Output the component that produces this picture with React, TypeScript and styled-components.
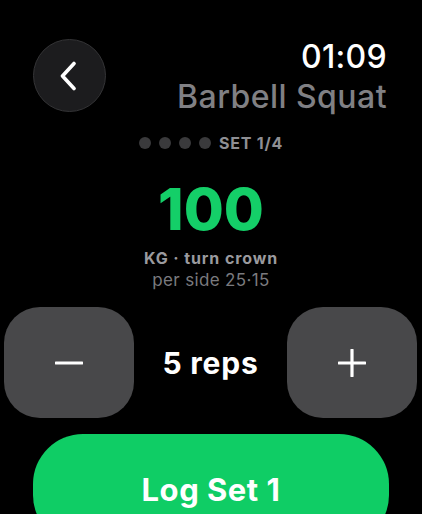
import React from "react";
import styled, { createGlobalStyle } from "styled-components";

const Global = createGlobalStyle`
  html, body {
    margin: 0;
    padding: 0;
    background: #000;
    overflow: hidden;
  }
  body {
    font-family: Inter, "Noto Sans", "Liberation Sans", sans-serif;
    -webkit-font-smoothing: antialiased;
  }
`;

const Screen = styled.div`
  width: 422px;
  height: 514px;
  background: #000;
  display: flex;
  flex-direction: column;
  overflow: hidden;
`;

const Header = styled.div`
  display: flex;
  justify-content: space-between;
  align-items: flex-start;
  padding: 37px 35px 0 33px;
`;

const BackButton = styled.button`
  width: 73px;
  height: 73px;
  margin-top: 2px;
  border-radius: 50%;
  background: #1c1c1e;
  border: 1.5px solid #343436;
  display: flex;
  align-items: center;
  justify-content: center;
  padding: 0 4px 0 0;
  box-sizing: border-box;
`;

const TitleBlock = styled.div`
  display: flex;
  flex-direction: column;
  align-items: flex-end;
`;

const Clock = styled.div`
  color: #fff;
  font-size: 32px;
  line-height: 40px;
  font-weight: 500;
  letter-spacing: 0.3px;
`;

const Exercise = styled.div`
  color: #808084;
  font-size: 32px;
  line-height: 40px;
  font-weight: 500;
  letter-spacing: 0.45px;
`;

const SetRow = styled.div`
  margin-top: 16px;
  display: flex;
  justify-content: center;
  align-items: center;
  gap: 8px;
  height: 20px;
`;

const Dot = styled.span<{ $active?: boolean }>`
  width: 12px;
  height: 12px;
  border-radius: 50%;
  background: ${(p) => (p.$active ? "#8e8e93" : "#3a3a3c")};
`;

const SetLabel = styled.span`
  color: #8e8e93;
  font-size: 16px;
  line-height: 20px;
  font-weight: 700;
  letter-spacing: 0.8px;
`;

const Weight = styled.div`
  margin-top: 24px;
  text-align: center;
  color: #14cf68;
  font-size: 58px;
  line-height: 64px;
  font-weight: 800;
`;

const Unit = styled.div`
  margin-top: 8px;
  text-align: center;
  color: #9a9a9e;
  font-size: 16px;
  line-height: 18px;
  font-weight: 700;
  letter-spacing: 0.9px;
`;

const PerSide = styled.div`
  margin-top: 3px;
  text-align: center;
  color: #7a7a7e;
  font-size: 17px;
  line-height: 20px;
  font-weight: 400;
  letter-spacing: 0.35px;
`;

const Stepper = styled.div`
  margin-top: 17px;
  display: flex;
  justify-content: space-between;
  align-items: center;
  padding: 0 5px 0 4px;
`;

const StepButton = styled.button`
  width: 130px;
  height: 111px;
  border-radius: 36px;
  background: #48484a;
  border: none;
  display: flex;
  align-items: center;
  justify-content: center;
  padding: 0;
`;

const Reps = styled.div`
  color: #fff;
  font-size: 30px;
  line-height: 36px;
  font-weight: 700;
  letter-spacing: 0.8px;
`;

const LogButton = styled.button`
  margin: 16px 33px 0 33px;
  height: 111px;
  flex-shrink: 0;
  border-radius: 50px;
  background: #0fcd65;
  border: none;
  color: #fff;
  font-family: inherit;
  font-size: 31px;
  font-weight: 700;
  letter-spacing: 0.5px;
  display: flex;
  align-items: center;
  justify-content: center;
  padding: 0;
`;

export default function App() {
  return (
    <>
      <Global />
      <Screen>
        <Header>
          <BackButton aria-label="Back">
            <svg width="18" height="30" viewBox="0 0 18 30" fill="none">
              <path
                d="M15 2.5 L3.5 15 L15 27.5"
                stroke="#fff"
                strokeWidth="3.6"
                strokeLinecap="round"
                strokeLinejoin="round"
              />
            </svg>
          </BackButton>
          <TitleBlock>
            <Clock>01:09</Clock>
            <Exercise>Barbell Squat</Exercise>
          </TitleBlock>
        </Header>
        <SetRow>
          <Dot />
          <Dot />
          <Dot />
          <Dot />
          <SetLabel>SET 1/4</SetLabel>
        </SetRow>
        <Weight>100</Weight>
        <Unit>KG · turn crown</Unit>
        <PerSide>per side 25·15</PerSide>
        <Stepper>
          <StepButton aria-label="Decrease reps">
            <svg width="28" height="28" viewBox="0 0 28 28">
              <path d="M1 14 H27" stroke="#fff" strokeWidth="3.2" strokeLinecap="round" />
            </svg>
          </StepButton>
          <Reps>5 reps</Reps>
          <StepButton aria-label="Increase reps">
            <svg width="28" height="28" viewBox="0 0 28 28">
              <path d="M1 14 H27 M14 1 V27" stroke="#fff" strokeWidth="3.2" strokeLinecap="round" />
            </svg>
          </StepButton>
        </Stepper>
        <LogButton>Log Set 1</LogButton>
      </Screen>
    </>
  );
}
